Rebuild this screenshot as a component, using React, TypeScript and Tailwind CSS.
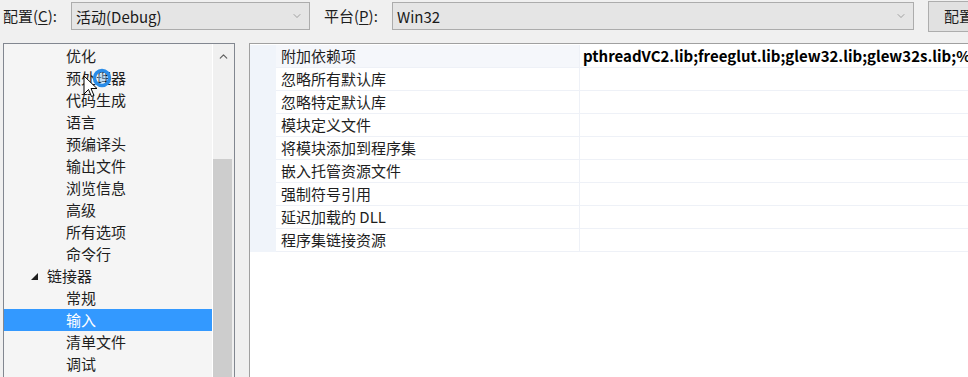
import { ChevronDown, ChevronUp } from 'lucide-react';

const font = { fontFamily: '"Noto Sans CJK SC", "Noto Sans", sans-serif' };

const treeItems: { label: string; level: number; expanded?: boolean; selected?: boolean }[] = [
    { label: '优化', level: 2 },
    { label: '预处理器', level: 2 },
    { label: '代码生成', level: 2 },
    { label: '语言', level: 2 },
    { label: '预编译头', level: 2 },
    { label: '输出文件', level: 2 },
    { label: '浏览信息', level: 2 },
    { label: '高级', level: 2 },
    { label: '所有选项', level: 2 },
    { label: '命令行', level: 2 },
    { label: '链接器', level: 1, expanded: true },
    { label: '常规', level: 2 },
    { label: '输入', level: 2, selected: true },
    { label: '清单文件', level: 2 },
    { label: '调试', level: 2 },
];

const props = [
    { name: '附加依赖项', value: 'pthreadVC2.lib;freeglut.lib;glew32.lib;glew32s.lib;%(' },
    { name: '忽略所有默认库', value: '' },
    { name: '忽略特定默认库', value: '' },
    { name: '模块定义文件', value: '' },
    { name: '将模块添加到程序集', value: '' },
    { name: '嵌入托管资源文件', value: '' },
    { name: '强制符号引用', value: '' },
    { name: '延迟加载的 DLL', value: '' },
    { name: '程序集链接资源', value: '' },
];

function Combo({ text, className }: { text: string; className: string }) {
    return (
        <div className={`shrink-0 h-[28px] bg-[#e5e5e5] border border-[#acacac] flex items-center pl-[4px] pr-[6px] ${className}`}>
            <span className="flex-1 text-[15px] text-[#1a1a1a] leading-none">{text}</span>
            <ChevronDown className="w-[12px] h-[12px] text-[#7a7a7a]" strokeWidth={1.3} />
        </div>
    );
}

export default function App() {
    return (
        <div className="relative w-[968px] h-[377px] overflow-hidden bg-[#f0f0f0] text-[#1e1e1e]" style={font}>
            {/* top bar */}
            <div className="h-[43px] flex items-start pt-[2px] overflow-hidden">
                <div className="shrink-0 w-[68px] ml-[3px] h-[28px] flex items-center text-[15px]">
                    配置(<span className="underline underline-offset-2">C</span>):
                </div>
                <Combo text="活动(Debug)" className="w-[239px]" />
                <div className="shrink-0 w-[68px] ml-[14px] h-[28px] flex items-center text-[15px]">
                    平台(<span className="underline underline-offset-2">P</span>):
                </div>
                <Combo text="Win32" className="w-[522px]" />
                <div className="shrink-0 ml-[14px] -mt-[1px] h-[31px] w-[40px] border-l border-t border-b border-[#adadad] bg-[#e1e1e1] flex items-center pl-[15px] text-[15px] whitespace-nowrap overflow-hidden">
                    配置
                </div>
            </div>

            <div className="flex h-[334px]">
                {/* tree */}
                <div className="shrink-0 ml-[3px] w-[232px] border-l border-t border-r border-[#828790] flex bg-[#f5f5f5]">
                    <div className="w-[209px] border-r border-white pt-[1px]">
                        {treeItems.map((it) => (
                            <div
                                key={it.label}
                                className={`h-[22px] flex items-center text-[15px] ${it.selected ? 'bg-[#3399ff] text-white' : ''}`}
                            >
                                {it.level === 1 ? (
                                    <div className="flex items-center">
                                        <svg width="7" height="7" viewBox="0 0 7 7" className="ml-[27px] mr-[9px]">
                                            <polygon points="0,7 7,7 7,0" fill="#1e1e1e" />
                                        </svg>
                                        <span>{it.label}</span>
                                    </div>
                                ) : (
                                    <span className="ml-[62px]">{it.label}</span>
                                )}
                            </div>
                        ))}
                    </div>
                    <div className="w-[21px] bg-[#f0f0f0] flex flex-col">
                        <div className="h-[24px] flex items-center justify-center">
                            <ChevronUp className="w-[13px] h-[13px] text-[#606060]" strokeWidth={2.2} />
                        </div>
                        <div className="h-[91px]" />
                        <div className="flex-1 w-[19px] bg-[#cdcdcd]" />
                    </div>
                </div>

                {/* property grid */}
                <div className="ml-[14px] flex-1 min-w-0 border-l border-t border-[#a0a0a0] bg-white">
                    <div className="pt-[1px] flex">
                        <div className="w-[26px] bg-[#f0f4fa] h-[207px]" />
                        <div className="flex-1 min-w-0">
                            {props.map((p, i) => (
                                <div key={p.name} className="h-[23px] flex border-b border-[#eef1f7]">
                                    <div
                                        className={`shrink-0 w-[304px] flex items-center pl-[5px] text-[15px] border-r border-[#eef1f7] ${i === 0 ? 'bg-[#f5f7fb]' : ''}`}
                                    >
                                        {p.name}
                                    </div>
                                    <div className="flex-1 min-w-0 flex items-center pl-[3px] text-[15px] font-bold whitespace-nowrap overflow-hidden text-black">
                                        {p.value}
                                    </div>
                                </div>
                            ))}
                        </div>
                    </div>
                </div>
            </div>

            {/* busy cursor */}
            <svg className="absolute left-[82px] top-[68px]" width="32" height="34" viewBox="0 0 32 34">
                <circle cx="20" cy="10" r="7.5" fill="none" stroke="#2a8ce8" strokeWidth="3.5" />
                <circle cx="20" cy="10" r="4.5" fill="#8cc4f4" opacity="0.5" />
                <path d="M2 8 L2 26 L6.5 21.5 L9.5 28.5 L12 27.5 L9 20.5 L15 20.5 Z" fill="white" stroke="black" strokeWidth="1" />
            </svg>
        </div>
    );
}
